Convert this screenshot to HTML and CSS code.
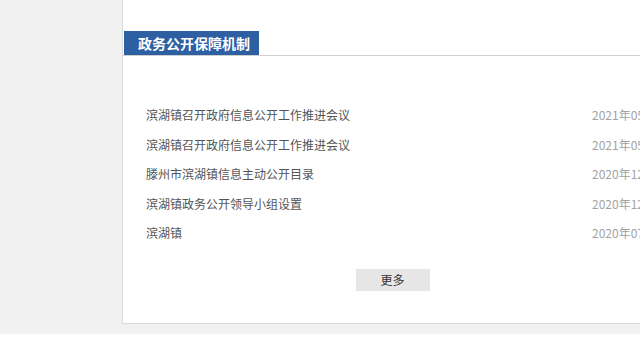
FILE: index.html
```
<!DOCTYPE html>
<html lang="zh-CN">

<head>
  <meta charset="UTF-8">
  <meta name="viewport" content="width=device-width, initial-scale=1.0">
  <title>政务公开保障机制</title>
  <link rel="stylesheet" href="styles.css">
</head>

<body>
  <div class="wrap">
    <div class="panel">
      <div class="panel-hd">
        <span class="tab">政务公开保障机制</span>
      </div>
      <ul class="list">
        <li class="item"><span class="title">滨湖镇召开政府信息公开工作推进会议</span><span class="date">2021年05月08日</span></li>
        <li class="item"><span class="title">滨湖镇召开政府信息公开工作推进会议</span><span class="date">2021年05月08日</span></li>
        <li class="item"><span class="title">滕州市滨湖镇信息主动公开目录</span><span class="date">2020年12月21日</span></li>
        <li class="item"><span class="title">滨湖镇政务公开领导小组设置</span><span class="date">2020年12月21日</span></li>
        <li class="item"><span class="title">滨湖镇</span><span class="date">2020年07月15日</span></li>
      </ul>
      <div class="more-box">
        <a class="more" href="#">更多</a>
      </div>
    </div>
  </div>
</body>

</html>
```

FILE: styles.css
```
html,
body {
  margin: 0;
  padding: 0;
  background: #fff;
  overflow: hidden;
  font-family: "Noto Sans CJK SC", "Microsoft YaHei", sans-serif;
  font-size: 12px;
}

.wrap {
  height: 334px;
  background: #f1f1f1;
  padding-left: 122px;
  box-sizing: border-box;
}

.panel {
  width: 540px;
  height: 324px;
  box-sizing: border-box;
  background: #fff;
  border-left: 1px solid #dcdcdc;
  border-bottom: 1px solid #dcdcdc;
  padding-top: 31px;
  display: flex;
  flex-direction: column;
}

.panel-hd {
  display: flex;
  padding-left: 1px;
  border-bottom: 1px solid #cfcfcf;
}

.tab {
  display: block;
  width: 135px;
  height: 24px;
  line-height: 24px;
  padding-left: 14px;
  box-sizing: border-box;
  background: #2d5fa2;
  color: #fff;
  font-size: 14px;
  font-weight: bold;
}

.list {
  list-style: none;
  margin: 44px 0 0;
  padding: 0 0 0 23px;
}

.item {
  display: flex;
  height: 29.5px;
  line-height: 29.5px;
  white-space: nowrap;
}

.title {
  width: 446px;
  flex-shrink: 0;
  color: #555;
}

.date {
  color: #a3a3a3;
}

.more-box {
  display: flex;
  justify-content: center;
  margin-top: 21px;
}

.more {
  display: block;
  width: 74px;
  height: 22px;
  line-height: 22px;
  text-align: center;
  background: #e6e6e6;
  color: #333;
  text-decoration: none;
}
```
